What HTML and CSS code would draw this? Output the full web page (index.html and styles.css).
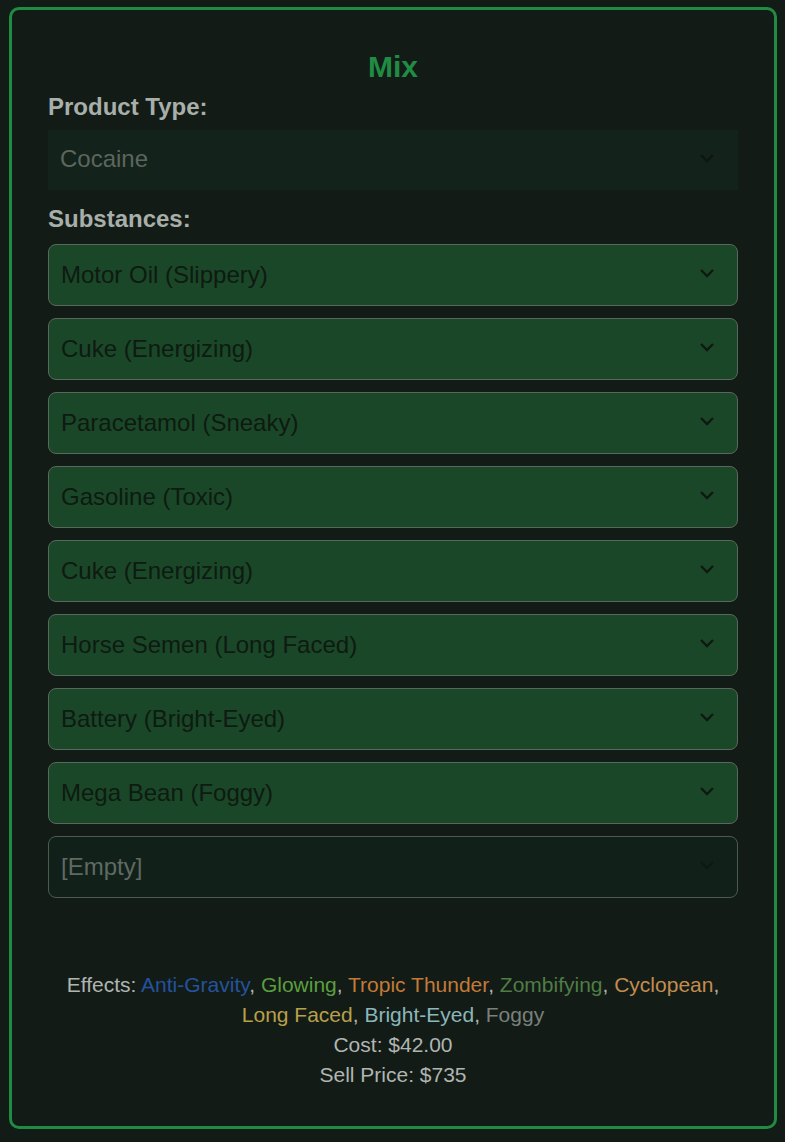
FILE: index.html
```html
<!DOCTYPE html>
<html lang="en">
<head>
  <meta charset="UTF-8" />
  <title>Mix</title>
  <link rel="stylesheet" href="styles.css">
</head>
<body>
  <div class="mix-card">
    <h1 class="mix-title">Mix</h1>

    <label class="field-label" for="productType">Product Type:</label>
    <div class="select-wrap product">
      <select id="productType" class="product-select" disabled>
        <option>Cocaine</option>
      </select>
      <svg class="chevron" width="16" height="10" viewBox="0 0 16 10"><polyline points="2,2 8,8 14,2" /></svg>
    </div>

    <label class="field-label subs-label">Substances:</label>
    <div class="substance-list">
      <div class="select-wrap"><select class="substance"><option>Motor Oil (Slippery)</option></select><svg class="chevron" width="16" height="10" viewBox="0 0 16 10"><polyline points="2,2 8,8 14,2" /></svg></div>
      <div class="select-wrap"><select class="substance"><option>Cuke (Energizing)</option></select><svg class="chevron" width="16" height="10" viewBox="0 0 16 10"><polyline points="2,2 8,8 14,2" /></svg></div>
      <div class="select-wrap"><select class="substance"><option>Paracetamol (Sneaky)</option></select><svg class="chevron" width="16" height="10" viewBox="0 0 16 10"><polyline points="2,2 8,8 14,2" /></svg></div>
      <div class="select-wrap"><select class="substance"><option>Gasoline (Toxic)</option></select><svg class="chevron" width="16" height="10" viewBox="0 0 16 10"><polyline points="2,2 8,8 14,2" /></svg></div>
      <div class="select-wrap"><select class="substance"><option>Cuke (Energizing)</option></select><svg class="chevron" width="16" height="10" viewBox="0 0 16 10"><polyline points="2,2 8,8 14,2" /></svg></div>
      <div class="select-wrap"><select class="substance"><option>Horse Semen (Long Faced)</option></select><svg class="chevron" width="16" height="10" viewBox="0 0 16 10"><polyline points="2,2 8,8 14,2" /></svg></div>
      <div class="select-wrap"><select class="substance"><option>Battery (Bright-Eyed)</option></select><svg class="chevron" width="16" height="10" viewBox="0 0 16 10"><polyline points="2,2 8,8 14,2" /></svg></div>
      <div class="select-wrap"><select class="substance"><option>Mega Bean (Foggy)</option></select><svg class="chevron" width="16" height="10" viewBox="0 0 16 10"><polyline points="2,2 8,8 14,2" /></svg></div>
      <div class="select-wrap empty"><select class="substance empty"><option>[Empty]</option></select><svg class="chevron" width="16" height="10" viewBox="0 0 16 10"><polyline points="2,2 8,8 14,2" /></svg></div>
    </div>

    <div class="mix-result">
      <div>Effects: <span class="fx-antigravity">Anti-Gravity</span>, <span class="fx-glowing">Glowing</span>, <span class="fx-tropic">Tropic Thunder</span>, <span class="fx-zombifying">Zombifying</span>, <span class="fx-cyclopean">Cyclopean</span>, <span class="fx-longfaced">Long Faced</span>, <span class="fx-brighteyed">Bright-Eyed</span>, <span class="fx-foggy">Foggy</span></div>
      <div>Cost: $42.00</div>
      <div>Sell Price: $735</div>
    </div>
  </div>
</body>
</html>
```

FILE: styles.css
```css
body {
  margin: 0;
  padding: 7px 8px 13px 9px;
  background: #131b16;
  font-family: "Liberation Sans", Arial, sans-serif;
}
.mix-card {
  border: 3px solid #1f8b43;
  border-radius: 10px;
  padding: 36px;
  background: #131b16;
}
.mix-title {
  margin: 4px 0 9px;
  text-align: center;
  font-size: 30px;
  font-weight: bold;
  color: #1f8b43;
}
.field-label {
  display: block;
  font-size: 24px;
  font-weight: bold;
  color: #a8afaa;
  margin-bottom: 9px;
}
.subs-label {
  margin-bottom: 11px;
}
.select-wrap {
  position: relative;
}
.select-wrap select {
  display: block;
  width: 100%;
  height: 62px;
  -webkit-appearance: none;
  appearance: none;
  font-family: "Liberation Sans", Arial, sans-serif;
  font-size: 24px;
  padding: 0 12px 1px;
  margin: 0;
  outline: none;
}
.product {
  margin-bottom: 15px;
}
.product-select {
  height: 60px !important;
  padding-bottom: 3px !important;
  border: none;
  border-radius: 0;
  background: #13221a;
  color: #5c665f;
  opacity: 1;
}
.chevron {
  position: absolute;
  right: 23px;
  top: 50%;
  margin-top: -7px;
  pointer-events: none;
}
.chevron polyline {
  fill: none;
  stroke: #0f1912;
  stroke-width: 2.4;
}
.product .chevron polyline {
  stroke: #0e1611;
}
.substance-list {
  display: flex;
  flex-direction: column;
  gap: 12px;
}
.substance {
  border: 1px solid #59685d;
  border-radius: 8px;
  background: #1a4727;
  color: #0e1a12;
}
.substance.empty {
  background: #12201a;
  border-color: #4d5a51;
  color: #5f6a62;
}
.empty .chevron polyline {
  stroke: #0f1913;
}
.mix-result {
  margin-top: 72px;
  text-align: center;
  font-size: 21px;
  line-height: 30px;
  color: #b0b5b2;
}
.fx-antigravity { color: #23539f; }
.fx-glowing { color: #5a9f3d; }
.fx-tropic { color: #c27a38; }
.fx-zombifying { color: #4f7d46; }
.fx-cyclopean { color: #c38d4f; }
.fx-longfaced { color: #b8a04b; }
.fx-brighteyed { color: #8bb7bb; }
.fx-foggy { color: #7a807c; }
```
